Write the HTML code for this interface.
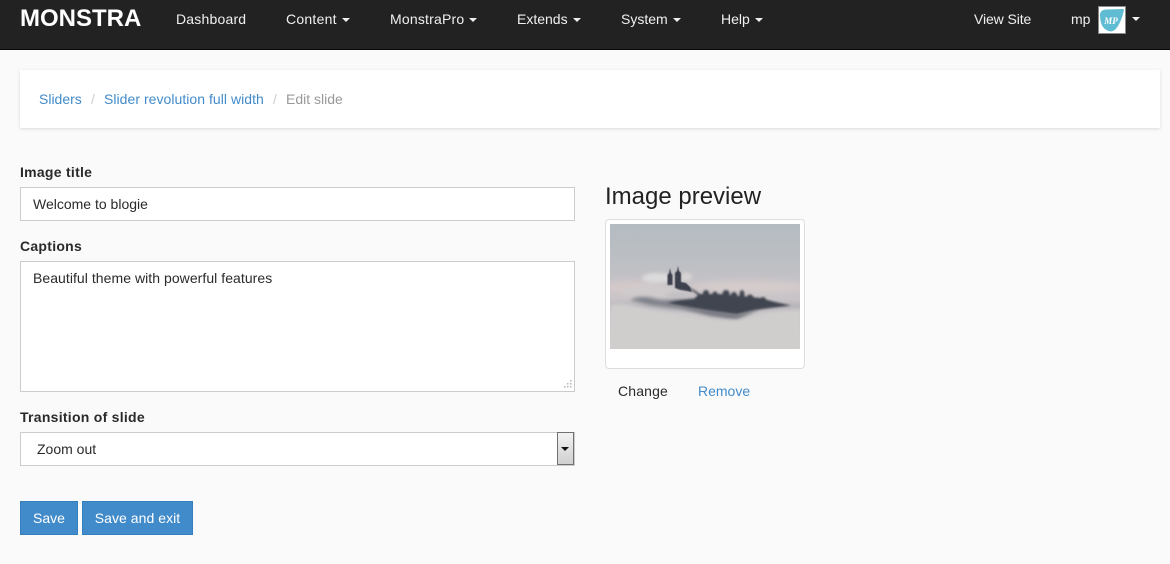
<!DOCTYPE html>
<html lang="en">
<head>
<meta charset="utf-8">
<title>Edit slide</title>
<style>
*{box-sizing:border-box}
html,body{margin:0;padding:0}
body{width:1170px;height:564px;position:relative;overflow:hidden;background:#fafafa;font-family:"Liberation Sans",Arial,sans-serif;font-size:14px;line-height:20px;color:#2a2a2a}
.a{position:absolute;white-space:nowrap}
.nav{position:absolute;left:0;top:0;width:1170px;height:50px;background:#222;border-bottom:1px solid #080808}
.n{position:absolute;top:9px;color:#f0f0f0;white-space:nowrap}
.c{display:inline-block;width:0;height:0;margin-left:5px;vertical-align:middle;border-top:4px solid #f0f0f0;border-left:4px solid transparent;border-right:4px solid transparent}
.brand{position:absolute;left:20px;top:5px;font-size:24px;line-height:28px;font-weight:bold;color:#fff}
.crumb{position:absolute;left:20px;top:70px;width:1140px;height:58px;background:#fff;box-shadow:0 1px 3px rgba(0,0,0,.13)}
a{color:#428bca;text-decoration:none}
label{position:absolute;left:20px;font-weight:bold;color:#2a2a2a;white-space:nowrap;letter-spacing:.27px}
.f{position:absolute;left:20px;width:555px;background:#fff;border:1px solid #ccc;color:#2a2a2a;padding-left:12px;white-space:nowrap}
.btn{position:absolute;top:501px;height:34px;background:#428bca;border:1px solid #357ebd;color:#fff;text-align:center;line-height:32px}
</style>
</head>
<body>
<div class="nav">
  <div class="brand">MONSTRA</div>
  <div class="n" style="left:176px;letter-spacing:.2px">Dashboard</div>
  <div class="n" style="left:286px;letter-spacing:.25px">Content<span class="c"></span></div>
  <div class="n" style="left:390px;letter-spacing:.2px">MonstraPro<span class="c"></span></div>
  <div class="n" style="left:517px">Extends<span class="c"></span></div>
  <div class="n" style="left:621px">System<span class="c"></span></div>
  <div class="n" style="left:721px">Help<span class="c"></span></div>
  <div class="n" style="left:974px;letter-spacing:-.1px">View Site</div>
  <div class="n" style="left:1071px">mp</div>
  <svg style="position:absolute;left:1098px;top:6px" width="28" height="28" viewBox="0 0 28 28">
    <rect x="0.500" y="0.500" width="27" height="27" fill="#fff" stroke="#8a8a8a"/>
    <path d="M2 9Q2 4 8 3.500L25 3Q26.500 3 25.500 6Q24 13 20 20Q17 25 13 25.500Q2 24 2 9Z" fill="#5fbcd3"/>
    <text x="13" y="18" font-family="Liberation Serif,serif" font-size="9" font-style="italic" font-weight="bold" fill="#fff" text-anchor="middle">MP</text>
  </svg>
  <span class="c" style="position:absolute;left:1127px;top:17px"></span>
</div>

<div class="crumb">
  <a class="a" style="left:19px;top:19px">Sliders</a>
  <span class="a" style="left:71px;top:19px;color:#ccc">/</span>
  <a class="a" style="left:84px;top:19px;letter-spacing:.04px">Slider revolution full width</a>
  <span class="a" style="left:253px;top:19px;color:#ccc">/</span>
  <span class="a" style="left:266px;top:19px;color:#999">Edit slide</span>
</div>

<label style="top:162px">Image title</label>
<div class="f" style="top:187px;height:34px;line-height:32px">Welcome to blogie</div>

<label style="top:236px">Captions</label>
<div class="f" style="top:261px;height:131px;padding-top:6px;letter-spacing:.05px">Beautiful theme with powerful features
  <svg style="position:absolute;right:2px;bottom:2px" width="9" height="9" viewBox="0 0 9 9" fill="#b5b5b5">
    <rect x="7" y="0" width="1.500" height="1.500"/><rect x="4" y="3" width="1.500" height="1.500"/><rect x="7" y="3" width="1.500" height="1.500"/>
    <rect x="1" y="6" width="1.500" height="1.500"/><rect x="4" y="6" width="1.500" height="1.500"/><rect x="7" y="6" width="1.500" height="1.500"/>
  </svg>
</div>

<label style="top:407px">Transition of slide</label>
<div class="f" style="top:432px;height:34px;line-height:32px;padding-left:16px">Zoom out
  <div style="position:absolute;right:0;top:-1px;width:17px;height:33px;border:1px solid #707070;background:linear-gradient(#f2f2f2,#d0d0d0)">
    <div style="position:absolute;left:3px;top:14px;width:0;height:0;border-top:4px solid #111;border-left:4px solid transparent;border-right:4px solid transparent"></div>
  </div>
</div>

<div class="btn" style="left:20px;width:58px">Save</div>
<div class="btn" style="left:82px;width:111px;letter-spacing:.05px">Save and exit</div>

<div class="a" style="left:605px;top:182px;font-size:24px;line-height:30px;color:#222">Image preview</div>
<div style="position:absolute;left:605px;top:219px;width:200px;height:150px;background:#fff;border:1px solid #ddd;border-radius:4px"></div>
<svg style="position:absolute;left:610px;top:224px" width="190" height="125" viewBox="0 0 190 125">
  <defs>
    <linearGradient id="sky" x1="0" y1="0" x2="0" y2="1">
      <stop offset="0" stop-color="#b4bbc1"/>
      <stop offset=".3" stop-color="#bcbfc4"/>
      <stop offset=".42" stop-color="#c2c1c5"/>
      <stop offset=".6" stop-color="#c9c4c7"/>
      <stop offset=".66" stop-color="#b7b5ba"/>
      <stop offset=".72" stop-color="#cbc8ca"/>
      <stop offset="1" stop-color="#d1cdcc"/>
    </linearGradient>
    <filter id="b0" x="-20%" y="-30%" width="140%" height="160%"><feGaussianBlur stdDeviation="1"/></filter>
    <filter id="b1" x="-20%" y="-50%" width="140%" height="200%"><feGaussianBlur stdDeviation="3.500"/></filter>
    <filter id="b2" x="-20%" y="-50%" width="140%" height="200%"><feGaussianBlur stdDeviation="1.800"/></filter>
    <filter id="b3" x="-50%" y="-20%" width="200%" height="140%"><feGaussianBlur stdDeviation=".5"/></filter>
    <clipPath id="cl"><rect width="190" height="125"/></clipPath>
  </defs>
  <g clip-path="url(#cl)">
    <rect width="190" height="125" fill="url(#sky)"/>
    <ellipse cx="140" cy="63" rx="62" ry="6" fill="#d6cccc" filter="url(#b1)"/>
    <ellipse cx="22" cy="64" rx="30" ry="7" fill="#d4c9ca" filter="url(#b1)"/>
    <ellipse cx="47" cy="54" rx="15" ry="5" fill="#dcdadb" filter="url(#b2)"/>
    <ellipse cx="76" cy="53" rx="6" ry="4" fill="#d8d4d4" filter="url(#b2)"/>
    <ellipse cx="45" cy="68" rx="34" ry="6" fill="#cfcbcc" filter="url(#b2)"/>
    <path d="M20 76Q30 71 42 74Q55 78 66 74L100 76L150 78L125 91L70 85L40 81Z" fill="#80828b" filter="url(#b2)"/>
    <path d="M70 84L100 86L127 90L152 84L127 96L100 92Z" fill="#777881" filter="url(#b2)"/>
    <g fill="#41444f" filter="url(#b0)">
      <path d="M76 62L84 66L90 70L110 70L130 72L150 74L165 78L181 81.500L160 84L145 86L127 90L105 87L80 83L58 79L70 76L84 75L88 71Z"/>
      <circle cx="96" cy="69" r="3"/><circle cx="105" cy="70" r="2.500"/><circle cx="116" cy="69.500" r="3.500"/><circle cx="124" cy="71" r="3"/>
      <ellipse cx="132" cy="71" rx="2.500" ry="5"/><circle cx="140" cy="74" r="3.500"/><circle cx="153" cy="76" r="3"/>
    </g>
    <path d="M57.500 61V51L59 49L60 44L61 49L62.500 51V61ZM65 61V49L67 47L68 42L69 47L71 49V58L76 59L80 63L82 68L70 66L65 64Z" fill="#3e414e" filter="url(#b3)"/>
    <ellipse cx="68" cy="71" rx="12" ry="3.500" fill="#c3c1c5" filter="url(#b2)"/>
    <path d="M0 80Q15 79 30 83Q60 90 100 96Q125 99 150 91Q170 86 190 86V125H0Z" fill="#d0cdcd" filter="url(#b2)"/>
  </g>
</svg>
<div class="a" style="left:618px;top:381px;color:#2a2a2a;letter-spacing:.15px">Change</div>
<a class="a" style="left:698px;top:381px">Remove</a>
</body>
</html>
